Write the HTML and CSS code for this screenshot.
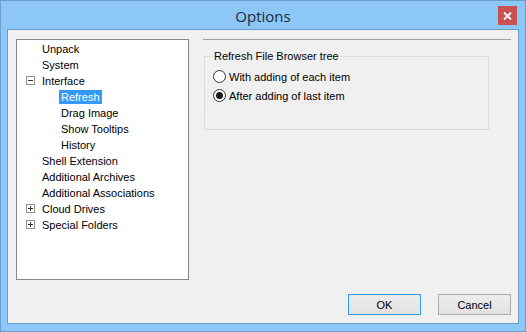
FILE: index.html
```html
<!DOCTYPE html>
<html lang="en">

<head>
    <meta charset="UTF-8">
    <title>Options</title>
    <link rel="stylesheet" href="styles.css">
</head>

<body>
    <div class="window">
        <header class="titlebar">
            <span class="title">Options</span>
            <button class="close" aria-label="Close">
                <svg width="9" height="8" viewBox="0 0 9 8">
                    <path d="M1 0.5 L8 7.5 M8 0.5 L1 7.5" stroke="#fff" stroke-width="1.8" />
                </svg>
            </button>
        </header>

        <div class="client">
            <div class="main">
                <ul class="tree">
                    <li class="node l1"><span class="label">Unpack</span></li>
                    <li class="node l1"><span class="label">System</span></li>
                    <li class="node l1"><span class="exp minus"></span><span class="label">Interface</span></li>
                    <li class="node l2"><span class="label selected">Refresh</span></li>
                    <li class="node l2"><span class="label">Drag Image</span></li>
                    <li class="node l2"><span class="label">Show Tooltips</span></li>
                    <li class="node l2"><span class="label">History</span></li>
                    <li class="node l1"><span class="label">Shell Extension</span></li>
                    <li class="node l1"><span class="label">Additional Archives</span></li>
                    <li class="node l1"><span class="label">Additional Associations</span></li>
                    <li class="node l1"><span class="exp plus"></span><span class="label">Cloud Drives</span></li>
                    <li class="node l1"><span class="exp plus"></span><span class="label">Special Folders</span></li>
                </ul>

                <section class="page">
                    <div class="watermark">SOFTPEDIA</div>
                    <fieldset class="group">
                        <legend>Refresh File Browser tree</legend>
                        <label class="radio"><span class="dot"></span>With adding of each item</label>
                        <label class="radio checked"><span class="dot"></span>After adding of last item</label>
                    </fieldset>
                </section>
            </div>

            <footer class="buttons">
                <button class="btn default">OK</button>
                <button class="btn">Cancel</button>
            </footer>
        </div>
    </div>
</body>

</html>
```

FILE: styles.css
```css
* {
    margin: 0;
    padding: 0;
    box-sizing: border-box;
}

body {
    font-family: "Liberation Sans", Arial, sans-serif;
    font-size: 11px;
    color: #000000;
    background: #ffffff;
}

.window {
    width: 526px;
    height: 332px;
    border: 1px solid #6c9dcf;
    background: #8cc7f8;
    padding: 0 6px 7px;
    display: flex;
    flex-direction: column;
}

.titlebar {
    height: 28px;
    display: flex;
    align-items: center;
    justify-content: center;
    position: relative;
}

.title {
    font-family: "Open Sans", "Liberation Sans", sans-serif;
    font-size: 15px;
    color: #1e2a3a;
    margin-top: 2px;
}

.close {
    position: absolute;
    right: 2px;
    top: 5px;
    width: 19px;
    height: 19px;
    border: none;
    background: #c75050;
    display: flex;
    align-items: center;
    justify-content: center;
}

.client {
    flex: 1;
    background: #f0f0f0;
    border: 1px solid #6c9dcf;
    display: flex;
    flex-direction: column;
}

.main {
    display: flex;
    margin-top: 9px;
}

.tree {
    list-style: none;
    width: 173px;
    height: 241px;
    margin-left: 8px;
    background: #ffffff;
    border: 1px solid #828790;
    padding-top: 1px;
}

.node {
    height: 16px;
    display: flex;
    align-items: center;
    position: relative;
}

.label {
    line-height: 14px;
    padding: 0 2px;
    white-space: nowrap;
}

.l1 .label {
    margin-left: 23px;
}

.l2 .label {
    margin-left: 42px;
}

.selected {
    background: #3399ff;
    color: #ffffff;
}

.exp {
    position: absolute;
    left: 9px;
    top: 3px;
    width: 9px;
    height: 9px;
    border: 1px solid #919191;
    background: #ffffff;
}

.exp::before,
.exp::after {
    content: '';
    position: absolute;
    background: #333333;
}

.exp::before {
    left: 1px;
    top: 3px;
    width: 5px;
    height: 1px;
}

.plus::after {
    left: 3px;
    top: 1px;
    width: 1px;
    height: 5px;
}

.page {
    position: relative;
    width: 308px;
    height: 241px;
    margin-left: 14px;
    border-top: 1px solid #a0a0a0;
}

.group {
    position: relative;
    width: 285px;
    height: 81px;
    margin: 9px 0 0 1px;
    border: 1px solid #dcdcdc;
    padding: 0 0 0 8px;
}

.group legend {
    padding: 0 2px;
    margin-left: -1px;
    line-height: 14px;
}

.radio {
    display: flex;
    align-items: center;
    height: 19px;
    gap: 3px;
}

.radio:first-of-type {
    margin-top: 4px;
}

.dot {
    width: 13px;
    height: 13px;
    border-radius: 50%;
    border: 1px solid #333333;
    background: #ffffff;
    position: relative;
}

.checked .dot::after {
    content: '';
    position: absolute;
    left: 2px;
    top: 2px;
    width: 7px;
    height: 7px;
    border-radius: 50%;
    background: #1a1a1a;
}

/* marca de agua de la captura */
.watermark {
    position: absolute;
    left: -3px;
    top: 45px;
    font-family: "Liberation Sans", sans-serif;
    font-weight: bold;
    font-size: 24px;
    color: rgba(255, 255, 255, 0.45);
    text-shadow: 0 0 1px rgba(0, 0, 0, 0.06);
    pointer-events: none;
}

.buttons {
    display: flex;
    justify-content: flex-end;
    gap: 17px;
    margin-top: 14px;
    padding-right: 7px;
}

.btn {
    width: 73px;
    height: 21px;
    font-family: inherit;
    font-size: 11px;
    background: linear-gradient(#ececec, #e2e2e2);
    border: 1px solid #adadad;
}

.btn.default {
    border-color: #3399ff;
}
```
